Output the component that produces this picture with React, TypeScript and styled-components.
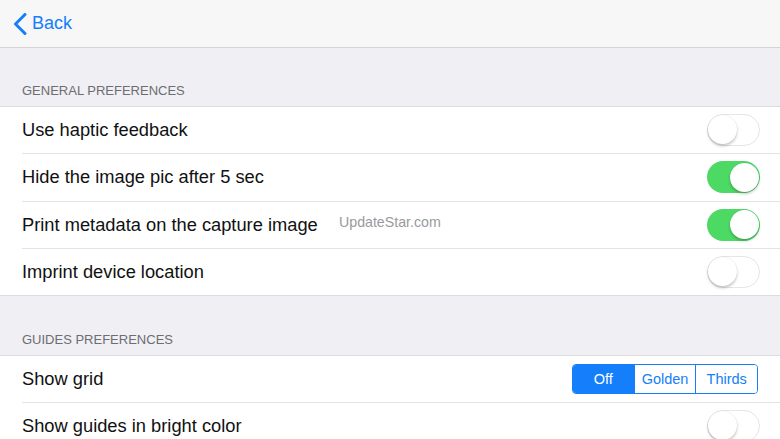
import styled, { createGlobalStyle } from 'styled-components';

const GlobalStyle = createGlobalStyle`
  html, body {
    margin: 0;
    padding: 0;
    background: #efeff4;
    font-family: "Liberation Sans", Arial, sans-serif;
    -webkit-font-smoothing: antialiased;
  }
`;

const Page = styled.div`
  width: 780px;
  height: 439px;
  overflow: hidden;
  background: #efeff4;
`;

const NavBar = styled.header`
  height: 47px;
  background: #f7f7f8;
  border-bottom: 1px solid #d4d4d8;
  display: flex;
  align-items: center;
  padding-left: 13px;
`;

const BackButton = styled.button`
  display: flex;
  align-items: center;
  gap: 5px;
  border: none;
  background: none;
  padding: 0;
  color: #147efb;
  font-family: inherit;
  font-size: 18px;
  cursor: pointer;
`;

const SectionHeader = styled.div<{ $top: number }>`
  padding: ${(p) => p.$top}px 22px 8px;
  font-size: 13px;
  color: #6d6d72;
  text-transform: uppercase;
`;

const Group = styled.div`
  background: #fff;
  border-top: 1px solid #dcdce0;
  border-bottom: 1px solid #dcdce0;
`;

const Row = styled.div<{ $last?: boolean }>`
  position: relative;
  height: 46.25px;
  display: flex;
  align-items: center;
  justify-content: space-between;
  margin-left: 22px;
  padding-right: 20px;
  border-bottom: ${(p) => (p.$last ? 'none' : '1px solid #e4e4e8')};
`;

const Label = styled.span`
  font-size: 18.3px;
  color: #111;
`;

const Watermark = styled.span`
  position: absolute;
  left: 317px;
  top: 12px;
  font-size: 14.2px;
  color: #9a9a9e;
`;

const Track = styled.div<{ $on: boolean }>`
  position: relative;
  width: 53px;
  height: 32px;
  border-radius: 16px;
  box-sizing: border-box;
  background: ${(p) => (p.$on ? '#4cd964' : '#fff')};
  border: ${(p) => (p.$on ? 'none' : '1.5px solid #e5e5ea')};
`;

const Knob = styled.div<{ $on: boolean }>`
  position: absolute;
  top: ${(p) => (p.$on ? '1.5px' : '0')};
  ${(p) => (p.$on ? 'right: 1.5px;' : 'left: 0;')}
  width: 29px;
  height: 29px;
  border-radius: 50%;
  background: #fff;
  box-shadow: 0 2px 3px rgba(0, 0, 0, 0.22), 0 0 0 0.5px rgba(0, 0, 0, 0.06);
`;

const Segmented = styled.div`
  display: flex;
  width: 186px;
  height: 30px;
  box-sizing: border-box;
  border: 1px solid #147efb;
  border-radius: 4px;
  overflow: hidden;
  margin-right: 2px;
`;

const Segment = styled.div<{ $active: boolean }>`
  flex: 1;
  display: flex;
  align-items: center;
  justify-content: center;
  font-size: 14.5px;
  color: ${(p) => (p.$active ? '#fff' : '#147efb')};
  background: ${(p) => (p.$active ? '#147efb' : '#fff')};
  & + & {
    border-left: 1px solid #147efb;
  }
`;

function Toggle({ on }: { on: boolean }) {
  return (
    <Track $on={on}>
      <Knob $on={on} />
    </Track>
  );
}

const general = [
  { label: 'Use haptic feedback', on: false },
  { label: 'Hide the image pic after 5 sec', on: true },
  { label: 'Print metadata on the capture image', on: true, mark: true },
  { label: 'Imprint device location', on: false },
];

export default function App() {
  return (
    <Page>
      <GlobalStyle />
      <NavBar>
        <BackButton>
          <svg width="14" height="22" viewBox="0 0 14 22">
            <path d="M12 1.5 L2.5 11 L12 20.5" fill="none" stroke="#147efb" strokeWidth="3" strokeLinecap="round" strokeLinejoin="round" />
          </svg>
          Back
        </BackButton>
      </NavBar>

      <SectionHeader $top={35}>General Preferences</SectionHeader>
      <Group>
        {general.map((g, i) => (
          <Row key={g.label} $last={i === general.length - 1}>
            <Label>{g.label}</Label>
            {g.mark && <Watermark>UpdateStar.com</Watermark>}
            <Toggle on={g.on} />
          </Row>
        ))}
      </Group>

      <SectionHeader $top={36}>Guides Preferences</SectionHeader>
      <Group>
        <Row>
          <Label>Show grid</Label>
          <Segmented>
            <Segment $active>Off</Segment>
            <Segment $active={false}>Golden</Segment>
            <Segment $active={false}>Thirds</Segment>
          </Segmented>
        </Row>
        <Row $last>
          <Label>Show guides in bright color</Label>
          <Toggle on={false} />
        </Row>
      </Group>
    </Page>
  );
}
